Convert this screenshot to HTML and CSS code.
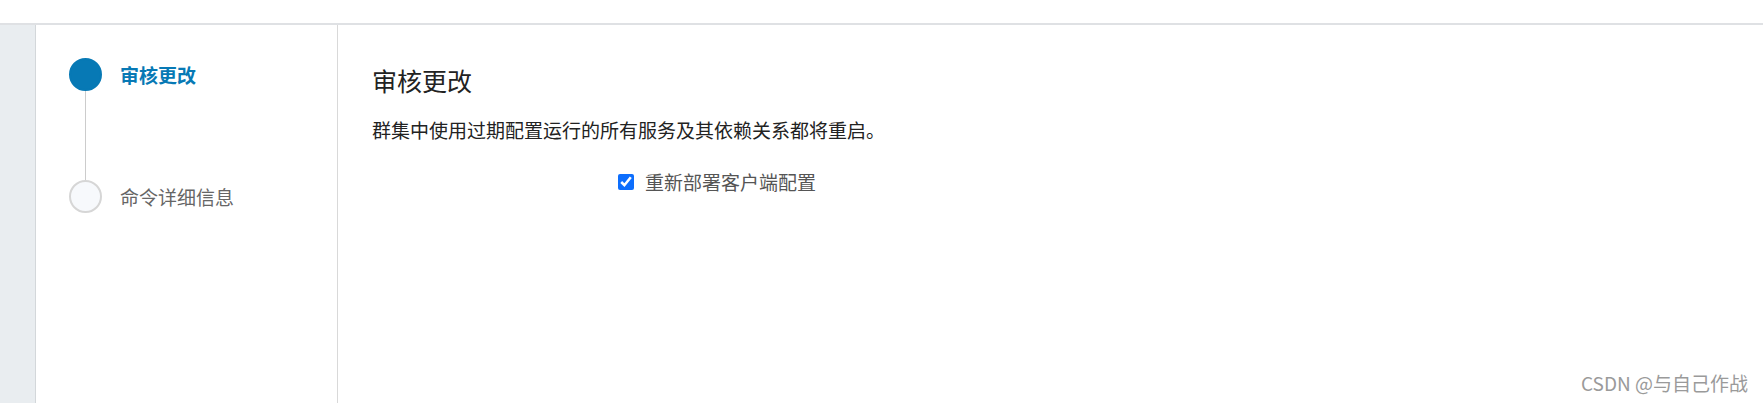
FILE: index.html
```html
<!DOCTYPE html>
<html lang="zh-CN">
<head>
    <meta charset="UTF-8">
    <meta name="viewport" content="width=device-width, initial-scale=1.0">
    <title>审核更改</title>
    <link rel="stylesheet" href="styles.css">
</head>
<body>
    <div class="top-bar"></div>
    <div class="page">
        <div class="side-strip"></div>
        <div class="wizard-nav">
            <div class="step active">
                <span class="step-dot"></span>
                <span class="step-name">审核更改</span>
            </div>
            <div class="step-line"></div>
            <div class="step">
                <span class="step-dot"></span>
                <span class="step-name">命令详细信息</span>
            </div>
        </div>
        <div class="wizard-body">
            <h2>审核更改</h2>
            <p>群集中使用过期配置运行的所有服务及其依赖关系都将重启。</p>
            <div class="check-row">
                <input type="checkbox" id="redeploy" checked>
                <label for="redeploy">重新部署客户端配置</label>
            </div>
        </div>
    </div>
    <div class="watermark">CSDN @与自己作战</div>
</body>
</html>
```

FILE: styles.css
```css
html, body {
    height: 100%;
}

body {
    font-family: "Noto Sans CJK SC", "Noto Sans", sans-serif;
    margin: 0;
    padding: 0;
    background-color: #ffffff;
    color: #222;
    overflow: hidden;
    display: flex;
    flex-direction: column;
}

.top-bar {
    height: 23px;
    flex-shrink: 0;
    border-bottom: 2px solid #dfe1e4;
}

.page {
    flex: 1;
    display: flex;
}

.side-strip {
    width: 35px;
    background-color: #e9edf0;
    border-right: 1px solid #d3d7da;
}

.wizard-nav {
    width: 302px;
    padding: 33px 0 0 33px;
    box-sizing: border-box;
    border-right: 1px solid #d9d9d9;
}

.step {
    display: flex;
    align-items: center;
    gap: 18px;
}

.step-dot {
    width: 29px;
    height: 29px;
    border-radius: 50%;
    border: 2px solid #d6d6d6;
    background-color: #f7f9fc;
    flex-shrink: 0;
}

.step.active .step-dot {
    background-color: #0779b5;
    border-color: #0779b5;
}

.step-name {
    font-size: 19px;
    line-height: 24px;
    color: #666;
}

.step.active .step-name {
    color: #0779b5;
    font-weight: bold;
}

.step-line {
    width: 1px;
    height: 89px;
    margin-left: 16px;
    background-color: #cccccc;
}

.wizard-body {
    flex: 1;
    padding: 40px 34px 0;
}

h2 {
    font-size: 25px;
    font-weight: normal;
    line-height: 30px;
    margin: 0;
    color: #222;
}

p {
    font-size: 19px;
    line-height: 24px;
    margin: 23px 0 0;
}

.check-row {
    display: flex;
    align-items: center;
    gap: 11px;
    margin: 28px 0 0 246px;
}

.check-row input {
    width: 16px;
    height: 16px;
    margin: 0;
    accent-color: #0d6efd;
}

.check-row label {
    font-size: 19px;
    line-height: 24px;
    color: #555;
}

.watermark {
    position: absolute;
    right: 15px;
    bottom: 7px;
    font-size: 19px;
    color: #9a9a9a;
}
```
